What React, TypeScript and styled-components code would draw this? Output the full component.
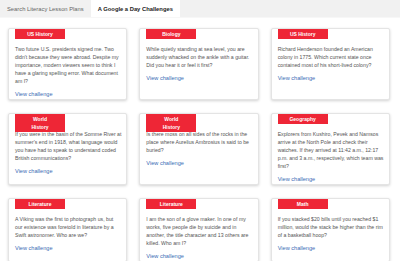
import styled, { createGlobalStyle } from 'styled-components'

const GlobalStyle = createGlobalStyle`
  html, body {
    margin: 0;
    padding: 0;
    background: #ffffff;
    font-family: 'Liberation Sans', Arial, sans-serif;
  }
`

const TabBar = styled.div`
  display: flex;
  height: 17px;
  background: #f1f1f1;
  border-bottom: 1px solid #f7f7f7;
`

const Tab = styled.div<{ $active?: boolean }>`
  display: flex;
  align-items: center;
  padding: 0 7px;
  font-size: 5.8px;
  color: ${(p) => (p.$active ? '#222' : '#666')};
  font-weight: ${(p) => (p.$active ? 700 : 400)};
  background: ${(p) => (p.$active ? '#fff' : 'transparent')};
  white-space: nowrap;
`

const Grid = styled.div`
  display: grid;
  grid-template-columns: repeat(3, 1fr);
  column-gap: 12px;
  row-gap: 13px;
  padding: 10px 10px 20px 8px;
`

const Card = styled.div`
  background: #fff;
  border: 1px solid #e4e4e4;
  border-radius: 2px;
  box-shadow: 0 1px 3px rgba(0, 0, 0, 0.18);
  padding: 0 4.5px 1px 6px;
  display: flex;
  flex-direction: column;
`

const Header = styled.div`
  height: 16px;
  position: relative;
`

const Badge = styled.div`
  position: absolute;
  top: 0;
  left: 0;
  width: 50px;
  box-sizing: border-box;
  padding: 1px 9px;
  background: #ee2636;
  color: #fff;
  font-size: 5px;
  font-weight: 700;
  line-height: 8px;
  text-align: center;
`

const Question = styled.p`
  margin: 0;
  font-size: 5.2px;
  line-height: 8px;
  color: #555;
`

const Link = styled.a`
  margin-top: 5px;
  font-size: 5.6px;
  line-height: 8px;
  color: #3a6cb5;
  text-decoration: none;
`

const challenges = [
  { topic: 'US History', text: 'Two future U.S. presidents signed me. Two didn\'t because they were abroad. Despite my importance, modern viewers seem to think I have a glaring spelling error. What document am I?' },
  { topic: 'Biology', text: 'While quietly standing at sea level, you are suddenly whacked on the ankle with a guitar. Did you hear it or feel it first?' },
  { topic: 'US History', text: 'Richard Henderson founded an American colony in 1775. Which current state once contained most of his short-lived colony?' },
  { topic: 'World History', text: 'If you were in the basin of the Somme River at summer\'s end in 1918, what language would you have had to speak to understand coded British communications?' },
  { topic: 'World History', text: 'Is there moss on all sides of the rocks in the place where Aurelius Ambrosius is said to be buried?' },
  { topic: 'Geography', text: 'Explorers from Kushiro, Pevek and Namsos arrive at the North Pole and check their watches. If they arrived at 11:42 a.m., 12:17 p.m. and 3 a.m., respectively, which team was first?' },
  { topic: 'Literature', text: 'A Viking was the first to photograph us, but our existence was foretold in literature by a Swift astronomer. Who are we?' },
  { topic: 'Literature', text: 'I am the son of a glove maker. In one of my works, five people die by suicide and in another, the title character and 13 others are killed. Who am I?' },
  { topic: 'Math', text: 'If you stacked $20 bills until you reached $1 million, would the stack be higher than the rim of a basketball hoop?' },
]

const App = () => {
  return (
    <>
      <GlobalStyle />
      <TabBar>
        <Tab>Search Literacy Lesson Plans</Tab>
        <Tab $active>A Google a Day Challenges</Tab>
      </TabBar>
      <Grid>
        {challenges.map((c, i) => (
          <Card key={i}>
            <Header>
              <Badge>{c.topic}</Badge>
            </Header>
            <Question>{c.text}</Question>
            <Link href="#">View challenge</Link>
          </Card>
        ))}
      </Grid>
    </>
  )
}

export default App
